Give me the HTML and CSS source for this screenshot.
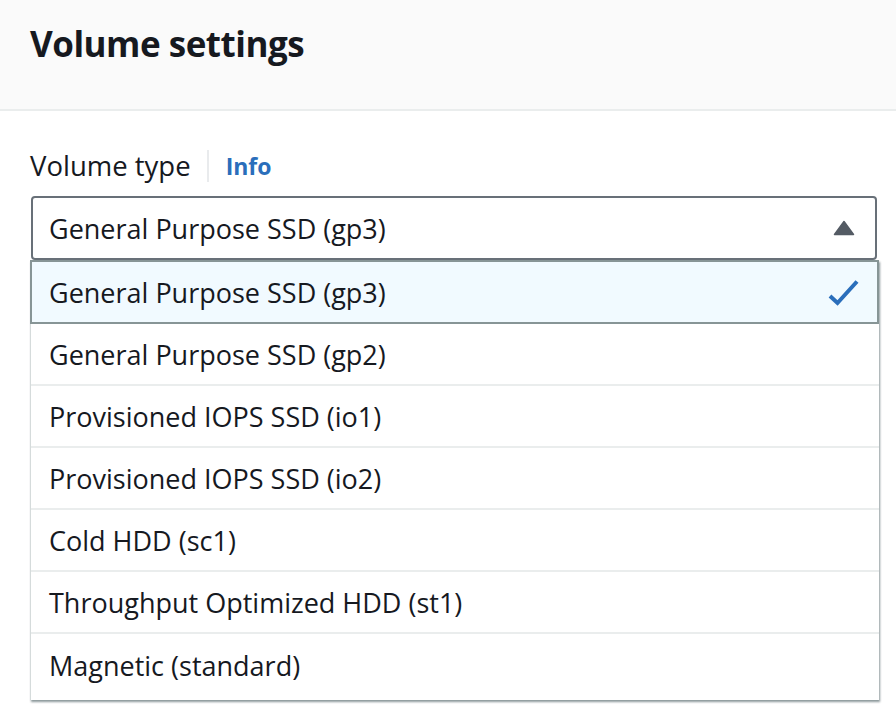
FILE: index.html
```html
<!DOCTYPE html>
<html lang="en">
<head>
<meta charset="utf-8">
<title>Volume settings</title>
<link rel="stylesheet" href="styles.css">
</head>
<body>
<div class="panel">
  <div class="header">
    <h2 class="title">Volume settings</h2>
  </div>
  <div class="content">
    <div class="field">
      <div class="label-row">
        <span class="label">Volume type</span>
        <span class="divider"></span>
        <a class="info" href="#">Info</a>
      </div>
      <div class="select-wrap">
        <div class="select">
          <span class="select-value">General Purpose SSD (gp3)</span>
          <svg class="caret" width="22" height="16" viewBox="0 0 22 16"><path d="M11 1.5 L20.5 14.5 L1.5 14.5 Z" fill="#545b64" stroke="#545b64" stroke-width="1.5" stroke-linejoin="round"/></svg>
        </div>
        <ul class="dropdown">
          <li class="option selected">
            <span>General Purpose SSD (gp3)</span>
            <svg class="check" width="32" height="32" viewBox="0 0 32 32"><path d="M3 20 L10.5 27 L30 5.5" fill="none" stroke="#2a6ebb" stroke-width="4" stroke-linejoin="miter"/></svg>
          </li>
          <li class="option">General Purpose SSD (gp2)</li>
          <li class="option">Provisioned IOPS SSD (io1)</li>
          <li class="option">Provisioned IOPS SSD (io2)</li>
          <li class="option">Cold HDD (sc1)</li>
          <li class="option">Throughput Optimized HDD (st1)</li>
          <li class="option last">Magnetic (standard)</li>
        </ul>
      </div>
    </div>
    <div class="field next">
      <div class="label">Size (GiB) <span class="muted">Info</span></div>
    </div>
  </div>
</div>
</body>
</html>
```

FILE: styles.css
```css
html, body {
  margin: 0;
  padding: 0;
  background: #ffffff;
}
body {
  font-family: "Open Sans", "Noto Sans", sans-serif;
  color: #16191f;
  overflow: hidden;
  height: 704px;
}
.header {
  background: #fafafa;
  border-bottom: 2px solid #eaeded;
  padding: 0 30px;
  box-sizing: border-box;
  height: 111px;
}
.title {
  margin: 0;
  padding-top: 20px;
  font-size: 35px;
  line-height: 48px;
  font-weight: 700;
  letter-spacing: -0.5px;
}
.content {
  padding: 33px 19px 0 30px;
}
.label-row {
  display: flex;
  align-items: center;
  height: 44px;
}
.label {
  font-size: 27.5px;
  line-height: 44px;
}
.divider {
  width: 2px;
  height: 32px;
  background: #e9ebed;
  margin: 0 17px 0 16px;
}
.info {
  font-size: 23px;
  font-weight: 700;
  color: #2a6ebb;
  text-decoration: none;
}
.select-wrap {
  position: relative;
  margin-top: 8px;
}
.select {
  height: 64px;
  box-sizing: border-box;
  border: 2px solid #687078;
  border-radius: 4px;
  margin-left: 1px;
  display: flex;
  align-items: center;
  justify-content: space-between;
  padding: 0 20px 0 16px;
  font-size: 27px;
}
.caret {
  display: block;
}
.dropdown {
  position: absolute;
  top: 100%;
  left: 0;
  right: -2px;
  margin: 0;
  padding: 0;
  list-style: none;
  background: #ffffff;
  border-left: 1px solid #d5dbdb;
  box-shadow: 1px 2px 2px rgba(0, 28, 36, 0.45);
  z-index: 2;
}
.option {
  height: 62px;
  box-sizing: border-box;
  border-bottom: 2px solid #eaeded;
  display: flex;
  align-items: center;
  justify-content: space-between;
  padding: 0 18px 0 18px;
  font-size: 27px;
}
.option.selected {
  height: 64px;
  background: #f1faff;
  border: 2px solid #879596;
  margin-left: -1px;
  padding-left: 17px;
}
.option.last {
  border-bottom: none;
  height: 66px;
  padding-bottom: 4px;
}
.check {
  display: block;
}
.field.next {
  margin-top: 434px;
  padding-left: 16px;
}
.muted {
  color: #16191f;
}
```
